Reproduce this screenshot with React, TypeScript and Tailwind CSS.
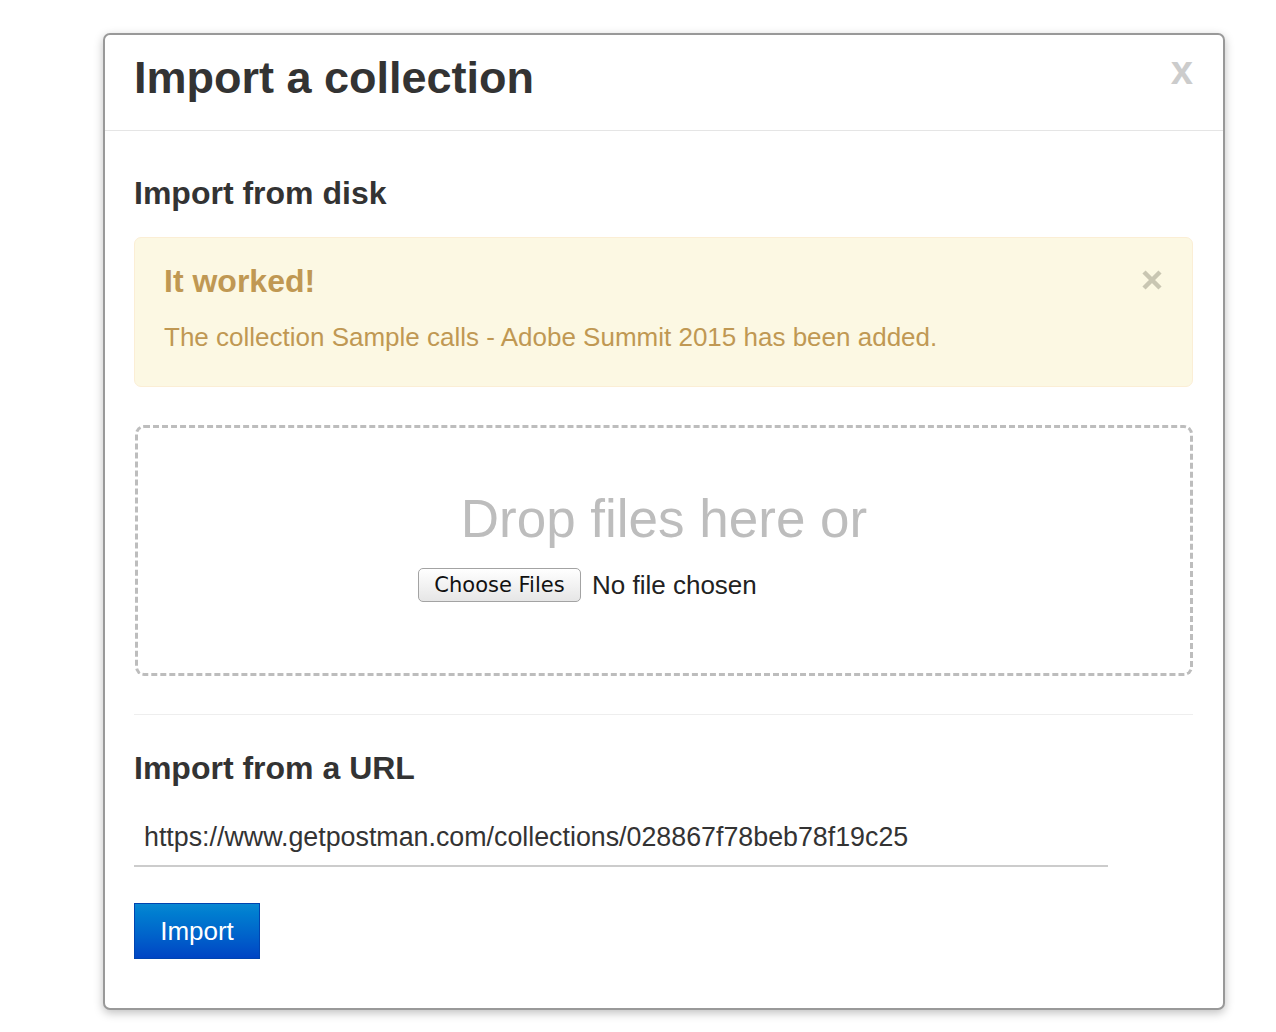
import React from "react";

export default function App() {
  const sans = { fontFamily: '"Liberation Sans", Arial, Helvetica, sans-serif' };
  return (
    <div className="min-h-[1032px] w-[1276px] bg-white pt-[33px]" style={sans}>
      <div className="ml-[103px] w-[1122px] rounded-[7px] border-2 border-[#999] bg-white shadow-[0_3px_10px_rgba(0,0,0,0.25)]">
        {/* header */}
        <div className="flex items-start justify-between border-b border-[#e5e5e5] pl-[29px] pr-[30px] h-[96px]">
          <h1 className="pt-[15px] text-[45px] font-bold leading-[55px] text-[#333]">Import a collection</h1>
          <span className="pt-[11px] text-[40px] font-bold leading-[48px] text-[#cccccc]">x</span>
        </div>
        {/* body */}
        <div className="pl-[29px] pr-[30px] pt-[43px] pb-[49px]">
          <h2 className="text-[32px] font-bold leading-[38px] text-[#333]">Import from disk</h2>
          <div className="mt-[25px] flex justify-between rounded-[7px] border border-[#fbeed5] bg-[#fcf8e3] pl-[29px] pr-[29px] pt-[24px] pb-[33px]">
            <div>
              <div className="text-[32px] font-bold leading-[38px] text-[#c09853]">It worked!</div>
              <div className="mt-[21px] text-[26px] leading-[32px] text-[#c09853]">
                The collection Sample calls - Adobe Summit 2015 has been added.
              </div>
            </div>
            <svg width="22" height="22" viewBox="0 0 22 22" className="mt-[7px]">
              <path d="M3 3 L19 19 M19 3 L3 19" stroke="#c9c6b2" strokeWidth="4.5" strokeLinecap="butt" />
            </svg>
          </div>
          <div className="mt-[38px] ml-px rounded-[9px] border-[3px] border-dashed border-[#bdbdbd] pt-[61px] pb-[71px]">
            <div className="text-center text-[53px] leading-[60px] text-[#bdbdbd]">Drop files here or</div>
            <div className="mt-[19px] ml-[280px] flex items-center gap-[11px]">
              <button
                className="h-[34px] w-[163px] rounded-[5px] border border-[#a3a3a3] bg-gradient-to-b from-white to-[#e6e6e6] text-[21px] leading-[30px] text-[#111]"
                style={{ fontFamily: '"DejaVu Sans", Verdana, sans-serif' }}
              >
                Choose Files
              </button>
              <span className="text-[26px] leading-[32px] text-[#222]">No file chosen</span>
            </div>
          </div>
          <div className="mt-[38px] h-px bg-[#eeeeee]" />
          <h2 className="mt-[34px] text-[32px] font-bold leading-[38px] text-[#333]">Import from a URL</h2>
          <div className="mt-[20px] w-[974px] border-b-2 border-[#cccccc] pl-[10px] pt-[14px] pb-[12px] text-[26.8px] leading-[32px] text-[#333]">
            https://www.getpostman.com/collections/028867f78beb78f19c25
          </div>
          <button className="mt-[36px] flex h-[56px] w-[126px] items-center justify-center border border-[#0044b0] bg-gradient-to-b from-[#0a88d2] to-[#0044c4] text-[26px] leading-[30px] text-white">
            Import
          </button>
        </div>
      </div>
    </div>
  );
}
